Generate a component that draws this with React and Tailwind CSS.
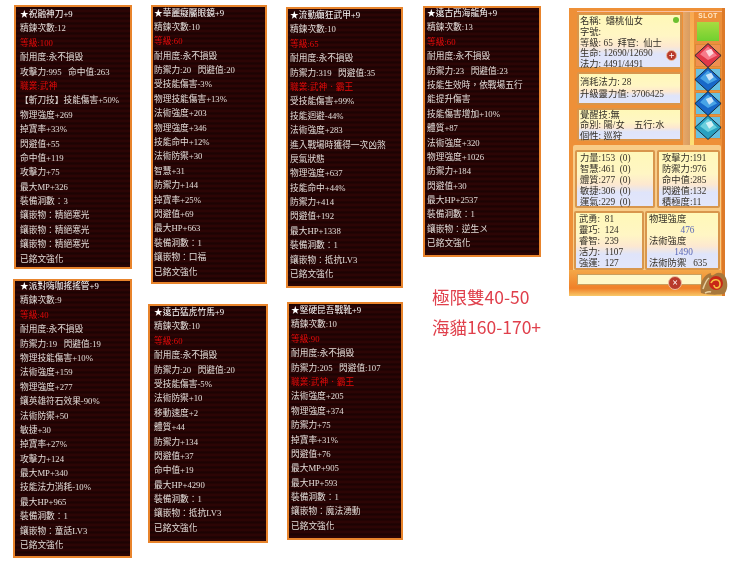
import React from 'react';

// Item tooltip cards. Lines starting with "!" are the red requirement lines.
const CARDS = {
  blade: ['★祝融神刀+9', '精鍊次數:12', '!等級:100', '耐用度:永不損毀', '攻擊力:995\u00a0\u00a0\u00a0命中值:263', '!職業:武神', '【斬刀技】技能傷害+50%', '物理強度+269', '掉寶率+33%', '閃避值+55', '命中值+119', '攻擊力+75', '最大MP+326', '裝備洞數：3', '鑲嵌物：精絕寒光', '鑲嵌物：精絕寒光', '鑲嵌物：精絕寒光', '已銘文強化'],
  pipe: ['★派對嗨咖搖搖管+9', '精鍊次數:9', '!等級:40', '耐用度:永不損毀', '防禦力:19\u00a0\u00a0\u00a0閃避值:19', '物理技能傷害+10%', '法術強度+159', '物理強度+277', '鑲英雄符石效果-90%', '法術防禦+50', '敏捷+30', '掉寶率+27%', '攻擊力+124', '最大MP+340', '技能法力消耗-10%', '最大HP+965', '裝備洞數：1', '鑲嵌物：童話LV3', '已銘文強化'],
  glasses: ['★華麗癡靨眼鏡+9', '精鍊次數:10', '!等級:60', '耐用度:永不損毀', '防禦力:20\u00a0\u00a0\u00a0閃避值:20', '受技能傷害-3%', '物理技能傷害+13%', '法術強度+203', '物理強度+346', '技能命中+12%', '法術防禦+30', '智慧+31', '防禦力+144', '掉寶率+25%', '閃避值+69', '最大HP+663', '裝備洞數：1', '鑲嵌物：口福', '已銘文強化'],
  horse: ['★遠古猛虎竹馬+9', '精鍊次數:10', '!等級:60', '耐用度:永不損毀', '防禦力:20\u00a0\u00a0\u00a0閃避值:20', '受技能傷害-5%', '法術防禦+10', '移動速度+2', '體質+44', '防禦力+134', '閃避值+37', '命中值+19', '最大HP+4290', '裝備洞數：1', '鑲嵌物：抵抗LV3', '已銘文強化'],
  armor: ['★流動癲狂武甲+9', '精鍊次數:10', '!等級:65', '耐用度:永不損毀', '防禦力:319\u00a0\u00a0\u00a0閃避值:35', '!職業:武神．霸王', '受技能傷害+99%', '技能迴避-44%', '法術強度+283', '進入戰場時獲得一次凶煞', '戾氣狀態', '物理強度+637', '技能命中+44%', '防禦力+414', '閃避值+192', '最大HP+1338', '裝備洞數：1', '鑲嵌物：抵抗LV3', '已銘文強化'],
  boots: ['★堅硬昆吾戰靴+9', '精鍊次數:10', '!等級:90', '耐用度:永不損毀', '防禦力:205\u00a0\u00a0\u00a0閃避值:107', '!職業:武神．霸王', '法術強度+205', '物理強度+374', '防禦力+75', '掉寶率+31%', '閃避值+76', '最大MP+905', '最大HP+593', '裝備洞數：1', '鑲嵌物：魔法湧動', '已銘文強化'],
  horn: ['★遠古西海龍角+9', '精鍊次數:13', '!等級:60', '耐用度:永不損毀', '防禦力:23\u00a0\u00a0\u00a0閃避值:23', '技能生效時，依戰場五行', '能提升傷害', '技能傷害增加+10%', '體質+87', '法術強度+320', '物理強度+1026', '防禦力+184', '閃避值+30', '最大HP+2537', '裝備洞數：1', '鑲嵌物：逆生〤', '已銘文強化'],
};

const Card = ({ lines, className, shift = '' }) => (
  <div
    className={`border-2 border-[#e8842c] bg-[#2a0606] bg-[repeating-linear-gradient(0deg,#2c0505_0px,#2c0505_2px,#1a0303_3px,#240404_5px)] ${className}`}
  >
    <div className={shift}>
      {lines.map((line, i) => (
        <div key={i} className={`h-[14.4px] leading-[14.4px] whitespace-nowrap ${line[0] === '!' ? 'text-[#e60a0a]' : i === 0 ? 'text-white' : 'text-[#e2dcd8]'}`}>
          {line[0] === '!' ? line.slice(1) : line}
        </div>
      ))}
    </div>
  </div>
);

const StatBox = ({ children, className }) => (
  <div className={`border-2 border-[#d8964c] rounded-[2px] bg-[linear-gradient(180deg,#fff8b8_0%,#fff6c4_40%,#fde8d0_60%,#dfe4fa_75%,#e2e6fa_100%)] text-[#353028] text-[9.3px] ${className}`}>
    {children}
  </div>
);

const Gem = ({ fill, light, bg }) => (
  <div className={`h-[23px] w-[26px] border border-[#d88838] flex items-center justify-center overflow-visible ${bg}`}>
    <svg width="28" height="25" viewBox="0 0 24 22" className="shrink-0">
      <polygon points="12,0.5 23.5,11 12,21.5 0.5,11" fill={fill} stroke="#123" strokeWidth="0.8" />
      <polygon points="12,3 20,11 12,15 5,10" fill={light} opacity="0.75" />
      <path d="M10 7l5-2 2 4-4 3z" fill="#fff" opacity="0.7" />
    </svg>
  </div>
);

const RoundButton = ({ size, children }) => (
  <div className={`${size} rounded-full bg-[#b83a2c] border border-[#f0c0a0] text-white flex items-center justify-center font-bold leading-none`}>
    {children}
  </div>
);

const CharacterPanel = () => (
  <div className="ml-[28px] mt-[8px] w-[156px] h-[288px] flex flex-col bg-[#ee9038] border-r-[3px] border-[#dd7a28] pl-[8px] pt-[3px] font-['Liberation_Serif','Noto_Sans_CJK_TC',serif]">
    <div className="flex h-[134px] border-t border-[#f8c0a0]">
      <div className="w-[105px] mr-[1px] pt-[1px] flex flex-col gap-[3px] shrink-0">
        <StatBox className="h-[56px] pl-[1px] pt-[1px] relative leading-[10.8px]">
          <div>名稱:&nbsp;&nbsp;蟠桃仙女</div>
          <div>字號:</div>
          <div>等級:&nbsp;65&nbsp;&nbsp;拜官:&nbsp;&nbsp;仙士</div>
          <div>生命:&nbsp;12690/12690</div>
          <div>法力:&nbsp;4491/4491</div>
          <span className="absolute right-[1px] top-[2px] w-[6px] h-[6px] rounded-full bg-[#6cc030]" />
          <div className="absolute right-[3px] top-[35px]">
            <RoundButton size="w-[11px] h-[11px] text-[10px]">+</RoundButton>
          </div>
        </StatBox>
        <StatBox className="h-[33px] pl-[1px] pt-[2px] leading-[12px]">
          <div>消耗法力:&nbsp;28</div>
          <div>升級靈力值:&nbsp;3706425</div>
        </StatBox>
        <StatBox className="h-[33px] pl-[1px] leading-[10.4px]">
          <div>覺醒技:無</div>
          <div>命別:&nbsp;陽/女&nbsp;&nbsp;&nbsp;&nbsp;五行:水</div>
          <div>個性:&nbsp;巡狩</div>
        </StatBox>
      </div>
      <div className="w-[7px] bg-[linear-gradient(90deg,#e8a868,#d89c60)] shrink-0" />
      <div className="w-[4px] bg-[linear-gradient(180deg,#f8a850,#fde078)] shrink-0" />
      <div className="w-[28px] shrink-0 flex flex-col items-center gap-[1px]">
        <div className="h-[7px] text-[6.5px] leading-[7px] font-bold tracking-[0.5px] text-[#ffe8c8] font-['Liberation_Sans',sans-serif]">SLOT</div>
        <div className="h-[23px] w-[26px] border-2 border-[#e89040] bg-[linear-gradient(180deg,#a8dc40,#70d030)]" />
        <Gem fill="#e03848" light="#ff90a0" bg="bg-[#f09050]" />
        <Gem fill="#1868c8" light="#58b8f0" bg="bg-[#68c0e0]" />
        <Gem fill="#1868c8" light="#58b8f0" bg="bg-[#68c0e0]" />
        <Gem fill="#28a0c0" light="#80e0e8" bg="bg-[#68c0e0]" />
      </div>
    </div>
    <div className="-ml-[4px] mr-[1px] pl-[2px] pt-[5px] bg-[#f8cc88] flex flex-col gap-[3px] rounded-t-[2px]">
      <div className="flex gap-[2px] h-[58px]">
        <StatBox className="w-[80px] pl-[3px] pt-[1px] leading-[10.9px]">
          <div className="whitespace-pre">力量:153  (0)</div>
          <div className="whitespace-pre">智慧:461  (0)</div>
          <div className="whitespace-pre">體質:277  (0)</div>
          <div className="whitespace-pre">敏捷:306  (0)</div>
          <div className="whitespace-pre">運氣:229  (0)</div>
        </StatBox>
        <StatBox className="w-[63px] pl-[3px] pt-[1px] leading-[10.9px]">
          <div>攻擊力:191</div>
          <div>防禦力:976</div>
          <div>命中值:285</div>
          <div>閃避值:132</div>
          <div>積極度:11</div>
        </StatBox>
      </div>
      <div className="flex gap-[1px] h-[59px] -ml-[1px]">
        <StatBox className="w-[70px] pl-[3px] pt-[1px] leading-[10.9px]">
          <div>武勇:&nbsp;&nbsp;81</div>
          <div>靈巧:&nbsp;&nbsp;124</div>
          <div>睿智:&nbsp;&nbsp;239</div>
          <div>活力:&nbsp;&nbsp;1107</div>
          <div>強運:&nbsp;&nbsp;127</div>
        </StatBox>
        <StatBox className="w-[75px] pl-[2px] pt-[1px] leading-[10.9px]">
          <div>物理強度</div>
          <div className="text-center text-[#5a68b8] pl-[8px]">476</div>
          <div>法術強度</div>
          <div className="text-center text-[#5a68b8]">1490</div>
          <div>法術防禦&nbsp;&nbsp;&nbsp;635</div>
        </StatBox>
      </div>
    </div>
    <div className="flex-1 relative bg-[linear-gradient(180deg,#f4a848,#f08028_70%,#f8c868)] -ml-[8px] pl-[8px] pt-[4px]">
      <div className="h-[11px] w-[125px] bg-[#fff8c8] border border-[#c8a060]" />
      <div className="absolute left-[99px] top-[6px]">
        <RoundButton size="w-[14px] h-[14px] text-[10px]">×</RoundButton>
      </div>
      <svg className="absolute right-[-6px] top-[-1px]" width="30" height="27" viewBox="0 0 30 27">
        <path d="M3 24C1 14 6 5 13 4c-1 3 2 3 4 1 5-3 11 0 12 8 1 6-1 10-3 12-6 1-17 1-23-1z" fill="#a8783c" />
        <circle cx="18" cy="14" r="7" fill="#c82818" />
        <path d="M13 14c2-5 9-4 9 1s-6 5-6 1" fill="none" stroke="#f8c040" strokeWidth="1.6" />
        <path d="M5 20c2-6 3-9 6-11M7 24c2-1 4-2 6-1" fill="none" stroke="#e8d0a0" strokeWidth="1.5" />
      </svg>
    </div>
  </div>
);

export default function App() {
  return (
    <div className="w-[750px] h-[576px] overflow-hidden bg-white flex items-start text-[8.7px] font-['Liberation_Serif','Noto_Sans_CJK_TC',serif] blur-[0.4px]">
      <div className="ml-[13px] w-[120px] flex flex-col items-start">
        <Card lines={CARDS.blade} className="mt-[5px] ml-[1px] w-[118px] h-[264px] pl-[4px]" />
        <Card lines={CARDS.pipe} className="mt-[10px] w-[119px] h-[279px] pl-[5px]" shift="-mt-[2px]" />
      </div>
      <div className="ml-[15px] w-[120px] flex flex-col items-start">
        <Card lines={CARDS.glasses} className="mt-[5px] ml-[3px] w-[116px] h-[279px] pl-[1px]" shift="-mt-[1.5px]" />
        <Card lines={CARDS.horse} className="mt-[20px] w-[120px] h-[239px] pl-[4px]" shift="-mt-[1px]" />
      </div>
      <div className="ml-[18px] w-[118px] flex flex-col items-start">
        <Card lines={CARDS.armor} className="mt-[7px] w-[117px] h-[281px] pl-[2px]" shift="-mt-[1px]" />
        <Card lines={CARDS.boots} className="mt-[14px] ml-[1px] w-[116px] h-[238px] pl-[2px]" shift="-mt-[1px]" />
      </div>
      <div className="ml-[19px] w-[118px] flex flex-col items-start">
        <Card lines={CARDS.horn} className="mt-[6px] w-[118px] h-[251px] pl-[2px]" shift="-mt-[2px]" />
        <div className="mt-[25px] ml-[9px] text-[17.5px] leading-[30px] text-[#e0404c] font-['Noto_Sans_CJK_TC',sans-serif] whitespace-nowrap">
          <div>極限雙40-50</div>
          <div>海貓160-170+</div>
        </div>
      </div>
      <CharacterPanel />
    </div>
  );
}
